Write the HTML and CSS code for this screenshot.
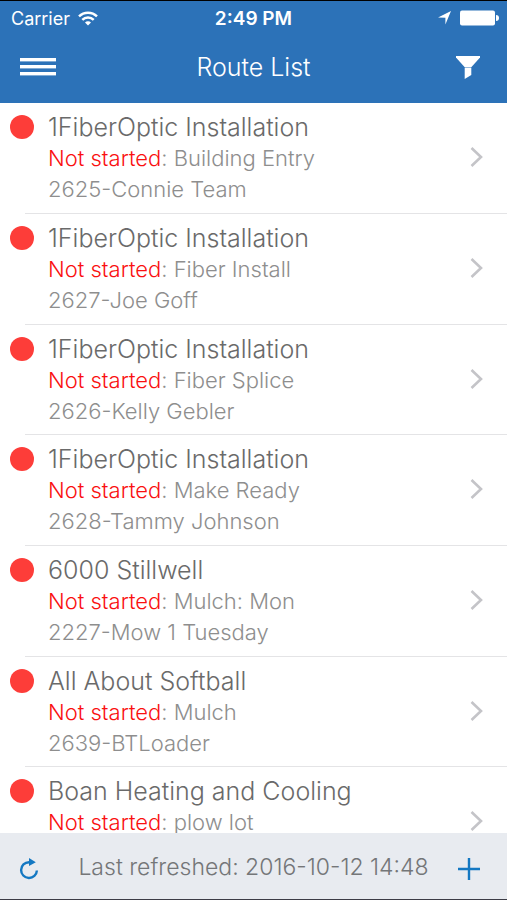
FILE: index.html
```
<!DOCTYPE html>
<html lang="en">
<head>
    <meta charset="UTF-8">
    <meta name="viewport" content="width=device-width, initial-scale=1.0">
    <title>Route List</title>
    <link rel="stylesheet" href="styles.css">
</head>
<body>
    <header class="header">
        <div class="status-bar">
            <div class="carrier">
                <span>Carrier</span>
                <svg width="20" height="15" viewBox="0 0 20 15" fill="none" stroke="#fff" stroke-width="2.4">
                    <path d="M1 5.4a12.8 12.8 0 0 1 18 0"/>
                    <path d="M4.3 8.9a8 8 0 0 1 11.4 0"/>
                    <path d="M10 14.6l-3-3.2a4.2 4.2 0 0 1 6 0z" fill="#fff" stroke="none"/>
                </svg>
            </div>
            <div class="clock">2:49 PM</div>
            <div class="indicators">
                <svg width="13" height="14" viewBox="0 0 13 14" fill="#fff">
                    <path d="M13 0L7.4 13.6V6.8L0 6.6z"/>
                </svg>
                <svg width="39" height="16" viewBox="0 0 39 16" fill="#fff">
                    <rect x="0" y="0.5" width="35" height="15" rx="2"/>
                    <path d="M36 5a3 3 0 0 1 0 6z"/>
                </svg>
            </div>
        </div>
        <div class="nav-bar">
            <button class="icon-button" aria-label="Menu">
                <svg width="36" height="18" viewBox="0 0 36 18" fill="#fff">
                    <rect width="36" height="3.4"/>
                    <rect y="7" width="36" height="3.4"/>
                    <rect y="14" width="36" height="3.4"/>
                </svg>
            </button>
            <h1>Route List</h1>
            <button class="icon-button" aria-label="Filter">
                <svg width="24" height="23" viewBox="0 0 24 23" fill="#fff">
                    <path d="M0 0h24v1.500L15.500 11H8.500L0 1.500z"/>
                    <path d="M8.700 11.500h6.600V19l-6.600 4z"/>
                </svg>
            </button>
        </div>
    </header>

    <ul class="route-list" id="routes"></ul>

    <footer class="toolbar">
        <button class="icon-button" aria-label="Refresh">
            <svg width="20" height="22" viewBox="0 0 20 22">
                <path d="M11.500 4.200H10A7.900 7.900 0 1 0 17.900 12.500" fill="none" stroke="#1478c2" stroke-width="2.400"/>
                <path d="M10 0l6.800 4.300L10 8z" fill="#1478c2"/>
            </svg>
        </button>
        <p>Last refreshed: 2016-10-12 14:48</p>
        <button class="icon-button" aria-label="Add">
            <svg width="22" height="22" viewBox="0 0 22 22" stroke="#1478c2" stroke-width="2.400">
                <path d="M11 0v22M0 11h22"/>
            </svg>
        </button>
    </footer>

    <script>
        const routes = [
            { name: "1FiberOptic Installation", task: "Building Entry", crew: "2625-Connie Team" },
            { name: "1FiberOptic Installation", task: "Fiber Install", crew: "2627-Joe Goff" },
            { name: "1FiberOptic Installation", task: "Fiber Splice", crew: "2626-Kelly Gebler" },
            { name: "1FiberOptic Installation", task: "Make Ready", crew: "2628-Tammy Johnson" },
            { name: "6000 Stillwell", task: "Mulch: Mon", crew: "2227-Mow 1 Tuesday" },
            { name: "All About Softball", task: "Mulch", crew: "2639-BTLoader" },
            { name: "Boan Heating and Cooling", task: "plow lot", crew: "" }
        ];

        document.getElementById("routes").innerHTML = routes.map(route => `
            <li>
                <a class="route" href="#">
                    <span class="dot"></span>
                    <div class="details">
                        <h2>${route.name}</h2>
                        <p><span class="status">Not started</span>: ${route.task}</p>
                        <p>${route.crew}</p>
                    </div>
                    <svg class="chevron" width="13" height="20" viewBox="0 0 13 20" fill="none" stroke="#c4c4c8" stroke-width="2.6">
                        <path d="M1.500 1l9.500 9-9.500 9"/>
                    </svg>
                </a>
            </li>
        `).join("");
    </script>
</body>
</html>
```
FILE: styles.css
```
* {
    box-sizing: border-box;
}
body {
    display: flex;
    flex-direction: column;
    height: 100vh;
    margin: 0;
    font-family: Inter, "Liberation Sans", sans-serif;
    font-weight: 300;
    background-color: #fff;
    border-top: 1px solid #000;
    border-bottom: 1px solid #3c3c46;
}
h1, h2, p {
    margin: 0;
    font-weight: 300;
}
svg {
    display: block;
}
.header {
    background-color: #2c72b8;
    color: #fff;
}
.status-bar, .nav-bar, .toolbar {
    display: grid;
    grid-template-columns: 1fr auto 1fr;
    align-items: center;
}
.status-bar {
    height: 34px;
    padding: 0 8px;
    font-size: 18px;
}
.carrier {
    display: flex;
    align-items: center;
    gap: 8px;
    padding-left: 3px;
    font-weight: 400;
}
.clock {
    font-size: 19px;
    font-weight: 600;
}
.indicators {
    display: flex;
    align-items: center;
    justify-content: flex-end;
    gap: 9px;
}
.nav-bar {
    height: 68px;
    padding: 0 27px 4px 20px;
}
.nav-bar h1 {
    padding-left: 7px;
    font-size: 25px;
}
.icon-button {
    justify-self: start;
    padding: 0;
    border: none;
    background: none;
    cursor: pointer;
}
.icon-button:last-child {
    justify-self: end;
}
.route-list {
    flex: 1;
    min-height: 0;
    margin: 0;
    padding: 0;
    list-style: none;
    overflow-y: auto;
    scrollbar-width: none;
}
.route-list li {
    height: 111px;
}
.route-list li:nth-child(3n) {
    height: 110px;
}
.route {
    display: flex;
    height: 100%;
    padding: 8px 24px 0 10px;
    color: #8e8e8e;
    text-decoration: none;
    background: linear-gradient(#e4e4e6, #e4e4e6) 25px 100% / 100% 1px no-repeat;
}
.dot {
    width: 24px;
    height: 24px;
    margin: 4px 14px 0 0;
    border-radius: 50%;
    background-color: #fd3d39;
}
.details {
    flex: 1;
    font-size: 22px;
    line-height: 31px;
}
.details h2 {
    font-size: 25px;
    line-height: 32px;
    color: #6a6a6a;
}
.status {
    color: #fa1010;
}
.chevron {
    margin-top: 36px;
}
.toolbar {
    height: 66px;
    padding: 2px 27px 0 19px;
    background-color: #e8ebf0;
    color: #747678;
    font-size: 23px;
}
.toolbar p {
    padding-left: 8px;
}
.toolbar .icon-button {
    margin-top: 4px;
}
```
